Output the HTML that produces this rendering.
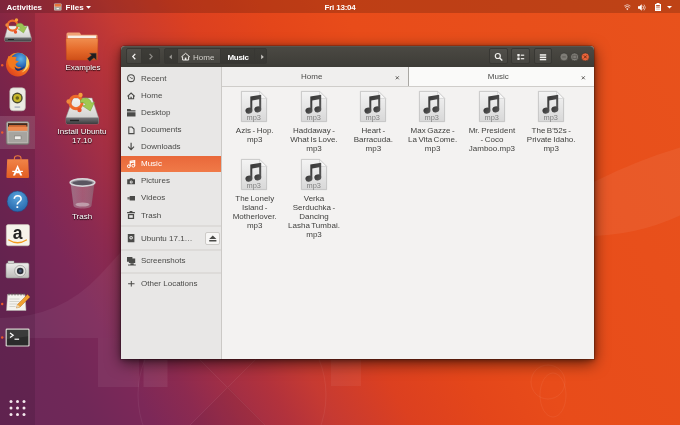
<!DOCTYPE html>
<html><head><meta charset="utf-8"><title>Files</title>
<style>
*{box-sizing:border-box;margin:0;padding:0}
html,body{width:680px;height:425px;overflow:hidden}
body{font-family:"Liberation Sans","DejaVu Sans",sans-serif;position:relative;font-size:8px;
background:linear-gradient(61.2deg,#6a2858 0%,#702858 10.2%,#7c2858 16.9%,#8c2a50 22.2%,#a02e46 26.9%,#b2323c 31.9%,#c63a32 36.8%,#dc4020 45.2%,#e4461a 53.7%,#e84c1a 62.5%,#e8521c 100%);
}
.abs{position:absolute}
#win,#topbar,.dl{will-change:transform}
svg{position:absolute;overflow:visible}
#topbar{left:0;top:0;width:680px;height:13px;background:rgba(0,0,0,.18);color:#fff;font-size:8px;font-weight:bold;line-height:13px;white-space:nowrap}
#dock{left:0;top:13px;width:35px;height:412px;background:rgba(20,0,20,.12)}
.dot{position:absolute;left:1px;width:2px;height:2px;border-radius:50%;background:#e8532a}
.dl{position:absolute;color:#fff;text-align:center;white-space:nowrap;font-size:8px;line-height:9.4px;text-shadow:0 1px 1px rgba(0,0,0,.8),0 0 2px rgba(0,0,0,.6)}
#win{left:121px;top:46px;width:473px;height:312.5px;background:#f3f2f1;border-radius:4px 4px 0 0;box-shadow:0 4px 15px rgba(0,0,0,.62),0 1px 5px rgba(0,0,0,.35),0 0 0 1px rgba(0,0,0,.18)}
#hdr{left:0;top:0;width:473px;height:21px;background:linear-gradient(#4b4943,#3d3c37);border-radius:4px 4px 0 0;border-top:1px solid #57554f}
.hb{position:absolute;top:1px;height:16.2px;background:linear-gradient(#514f4a,#464540);border:1px solid #383733;border-radius:2px}
.hbd{background:linear-gradient(#3d3c37,#383733)}
#side{left:0;top:21px;width:101px;height:291.5px;background:#e8e7e6;border-right:1px solid #cbc9c6}
.srow{position:absolute;left:0;width:100px;height:17px;line-height:17px;padding-left:20px;color:#4a4a48;font-size:8px;white-space:nowrap}
.srow.sel{background:linear-gradient(#e9683a,#f07a48);color:#fff}
.sep{position:absolute;left:0;width:100px;height:2px;background:#dddbd9}
#tabs{left:101px;top:21px;width:372px;height:20px;background:#eceae8;border-bottom:1px solid #cfcdca}
.tab{position:absolute;top:0;height:19px;line-height:20.5px;text-align:center;padding-right:6px;color:#4a4a48;font-size:8px}
.tx{position:absolute;top:0;font-size:8px;color:#55534f}
.file{position:absolute;width:60px;text-align:center;color:#3f3f3d;font-size:8px;line-height:9px;word-spacing:-0.7px}
.file .lbl{position:absolute;top:35.2px;left:-1.6px;width:64px}
</style></head><body>
<svg id="wall" width="680" height="425" viewBox="0 0 680 425" style="left:0;top:0">
<path d="M0 318Q60 318 100 275T150 215V338H0z" fill="#fff" opacity=".055"/>
<rect x="98" y="338" width="41" height="49" fill="#fff" opacity=".06"/>
<rect x="143.5" y="360" width="24" height="27" fill="#fff" opacity=".07"/>
<rect x="331" y="360" width="30" height="26" fill="#fff" opacity=".05"/>
<circle cx="232" cy="395" r="94" fill="none" stroke="#fff" stroke-width="1" opacity=".06"/>
<path d="M150 310L305 465M305 310L150 465" stroke="#fff" stroke-width="1" opacity=".06"/>
<path d="M228 387L320 480H136z" fill="#000" opacity=".04"/>
<path d="M520 228Q600 168 700 142V205Q620 252 520 228z" fill="#fff" opacity=".06"/>
<circle cx="548" cy="382" r="17" fill="none" stroke="#fff" stroke-width=".8" opacity=".08"/>
<ellipse cx="553" cy="395" rx="13" ry="22" fill="none" stroke="#fff" stroke-width=".8" opacity=".07"/>
</svg>
<div id="topbar" class="abs">
<span class="abs" style="left:6.5px;top:.6px">Activities</span>
<svg style="left:54px;top:3px" width="8" height="8" viewBox="0 0 8 8"><rect x="0" y="0.5" width="7.5" height="7" rx="0.8" fill="#c9c5bf"/><rect x="0.6" y="1" width="6.3" height="2.6" fill="#e8763a"/><rect x="0.6" y="4" width="6.3" height="3" fill="#a9a6a0"/><rect x="2.6" y="5" width="2.3" height="1.2" fill="#f4f2ee"/></svg>
<span class="abs" style="left:65.5px;top:.6px">Files</span>
<svg style="left:85.5px;top:5.5px" width="5" height="3" viewBox="0 0 5 3"><path d="M0 0h5L2.5 2.8z" fill="#fff"/></svg>
<span class="abs" style="left:324.5px;top:.6px;letter-spacing:-0.2px">Fri 13:04</span>
<svg style="left:624.2px;top:4.2px;opacity:.9" width="6.6" height="6.6" viewBox="0 0 14 14"><path d="M7 13.5L4.6 10.3a3.4 3.4 0 0 1 4.8 0z" fill="#fff"/><path d="M2.2 7.2a7 7 0 0 1 9.6 0" fill="none" stroke="#fff" stroke-width="1.8"/><path d="M0.3 4.3a10 10 0 0 1 13.4 0" fill="none" stroke="#fff" stroke-width="1.8" opacity=".75"/></svg>
<svg style="left:637.5px;top:3.5px" width="8" height="7" viewBox="0 0 16 14"><path d="M0 4.5h3L7.5 0.5v13L3 9.5H0z" fill="#fff"/><path d="M9.5 3.5a5 5 0 0 1 0 7" fill="none" stroke="#fff" stroke-width="1.7"/><path d="M12 1.2a8.5 8.5 0 0 1 0 11.6" fill="none" stroke="#fff" stroke-width="1.7" opacity=".7"/></svg>
<svg style="left:653.5px;top:3px" width="8" height="8" viewBox="0 0 16 16"><path d="M5 0h6v2h3v14H2V2h3z" fill="#fff"/><rect x="4.3" y="4.2" width="7.4" height="2.6" fill="#b5441c"/><rect x="4.3" y="8" width="7.4" height="2.4" fill="#d9a58f"/><rect x="4.3" y="11.4" width="7.4" height="2.4" fill="#e9cfc4"/></svg>
<svg style="left:667px;top:5.8px" width="5" height="3" viewBox="0 0 5 3"><path d="M0 0h5L2.5 2.6z" fill="#fff"/></svg>
</div>
<div id="dock" class="abs"></div>
<div class="abs" style="left:0;top:116px;width:35px;height:33px;background:rgba(255,255,255,.13)"></div>
<svg id="dockicons" style="left:0;top:0" width="35" height="425" viewBox="0 0 35 425">
<defs>
<linearGradient id="gdrv" x1="0" y1="0" x2="0" y2="1"><stop offset="0" stop-color="#f4f4f2"/><stop offset="1" stop-color="#c9c9c6"/></linearGradient>
<radialGradient id="gff" cx=".6" cy=".35" r=".7"><stop offset="0" stop-color="#5fb4e8"/><stop offset=".6" stop-color="#2a68b8"/><stop offset="1" stop-color="#1b3f86"/></radialGradient>
<linearGradient id="gfox" x1=".9" y1=".1" x2=".2" y2=".95"><stop offset="0" stop-color="#fbd23a"/><stop offset=".35" stop-color="#f58a22"/><stop offset=".7" stop-color="#ee5f1e"/><stop offset="1" stop-color="#dc431c"/></linearGradient>
<linearGradient id="gcab" x1="0" y1="0" x2="0" y2="1"><stop offset="0" stop-color="#b9b7b2"/><stop offset="1" stop-color="#8f8d88"/></linearGradient>
<linearGradient id="gbag" x1="0" y1="0" x2="0" y2="1"><stop offset="0" stop-color="#f08448"/><stop offset="1" stop-color="#e25d22"/></linearGradient>
<radialGradient id="ghelp" cx=".5" cy=".3" r=".8"><stop offset="0" stop-color="#5aa4dc"/><stop offset="1" stop-color="#1f5fa6"/></radialGradient>
<linearGradient id="gcam" x1="0" y1="0" x2="0" y2="1"><stop offset="0" stop-color="#eeeeec"/><stop offset="1" stop-color="#bcbcb9"/></linearGradient>
</defs>
<!-- installer -->
<g>
<path d="M8 26h20l3.2 11.5v3a1 1 0 0 1-1 1H5.8a1 1 0 0 1-1-1v-3z" fill="url(#gdrv)" stroke="#9b9b98" stroke-width=".5"/>
<path d="M4.8 37.5h26.4v3a1 1 0 0 1-1 1H5.8a1 1 0 0 1-1-1z" fill="url(#gdrvf)"/>
<rect x="8" y="39" width="6" height="1" fill="#222"/>
<circle cx="12.6" cy="25.6" r="5" fill="none" stroke="#ee6a2a" stroke-width="2.1"/>
<circle cx="7" cy="25" r="1.7" fill="#f08a3a"/><circle cx="16.5" cy="20" r="1.7" fill="#f5a03c"/><circle cx="15.5" cy="32" r="1.7" fill="#e8532a"/>
<path d="M16.5 24.5c3-2.5 7-1.5 8 2.5l2.5-.5-3.5 6.5-5.5-4 2.5-.6c-.8-1.8-2.5-2.4-4-1.8z" fill="#9cc455" stroke="#6e9e38" stroke-width=".4"/>
</g>
<!-- firefox -->
<circle class="dotc" cx="2.2" cy="65.2" r="1.2" fill="#ec5a2a"/>
<circle cx="17.8" cy="64.6" r="11.8" fill="url(#gfox)"/>
<circle cx="19" cy="61.6" r="8.8" fill="url(#gff)"/>
<path d="M26.5 56c2.6 3 3 7 1.6 10.5-1.2 3-3.6 5-6.5 6 3-2.5 4.5-5.5 4.5-9 0-2.6.6-5.5.4-7.5z" fill="#fbe37a" opacity=".9"/>
<path d="M8 56.5c1.5-.4 3.2-.2 4.4.6 1.6-.5 3.4-.3 4.4.6-.9.7-1.3 1.7-1.2 2.7 1.3.4 2.4.6 3.3 1.3-1.7.5-3.1 1.6-3.4 3 1.2 1.9 3.3 2.8 5.6 2.2-2 2.6-5.8 3.4-8.6 2C9 67.5 7.2 63.5 8 56.5z" fill="#f2791f"/>
<path d="M14.6 66.5c1.5 1.9 3.9 2.7 6.4 2 1.5-.5 2.6-1.3 3.4-2.4-1.4 3.2-4.2 5-7 4.6-1.8-.8-2.7-2.4-2.8-4.2z" fill="#1b2c6a"/>
<!-- rhythmbox -->
<rect x="9.8" y="87.8" width="15.6" height="23" rx="3.5" fill="#ecebe4" stroke="#b9b8ae" stroke-width=".6"/>
<circle cx="17.3" cy="98" r="5.4" fill="#4a4a30"/><circle cx="17.3" cy="98" r="4" fill="#c9b92a"/><circle cx="17.3" cy="98" r="1.8" fill="#6a6418"/>
<rect x="14.3" y="106.3" width="6" height="1.6" rx=".8" fill="#b5bcc4"/>
<!-- files -->
<circle cx="2.2" cy="132.5" r="1.2" fill="#ec5a2a"/>
<rect x="6.3" y="121.6" width="22.8" height="22.8" rx="1.8" fill="url(#gcab)" stroke="#6f6d68" stroke-width=".6"/>
<rect x="8" y="123.2" width="19.4" height="7.6" fill="#ee8a50"/>
<rect x="8" y="123.2" width="19.4" height="3.4" fill="#3c2a22"/>
<rect x="9" y="125.2" width="17.4" height="1.6" fill="#e8763a"/>
<rect x="8" y="131.8" width="19.4" height="11" fill="#a6a49f" stroke="#cfcdc8" stroke-width=".5"/>
<rect x="14.4" y="136" width="6.6" height="3.6" fill="#f1efeb" stroke="#6f6d68" stroke-width=".5"/>
<!-- software -->
<path d="M7.2 159.3h21l.8 17.7a1 1 0 0 1-1 1h-20.6a1 1 0 0 1-1-1z" fill="url(#gbag)"/>
<path d="M14.4 160.5v-2.2a3.3 2.6 0 0 1 6.6 0v2.2" fill="none" stroke="#ec7a3e" stroke-width="1.1"/>
<path d="M12.9 175.6l4.7-10.6l4.7 10.6h-2.2l-.9-2.3h-3.2l-.9 2.3zM16.7 171.4h1.8l-.9-2.6z" fill="#fff" fill-rule="evenodd"/>
<rect x="12.3" y="170.8" width="10.6" height="1.2" fill="#fff"/>
<!-- help -->
<circle cx="17.5" cy="201.4" r="10.4" fill="url(#ghelp)" stroke="#1a4a86" stroke-width=".5"/>
<text x="17.5" y="207.6" style="font-family:'Liberation Sans',sans-serif" font-size="17.5" fill="#fff" text-anchor="middle">?</text>
<!-- amazon -->
<rect x="6.3" y="224.6" width="23.2" height="21.2" rx="1.8" fill="#f6f3ea" stroke="#cfccbf" stroke-width=".5"/>
<text x="17.6" y="238.6" style="font-family:'Liberation Sans',sans-serif" font-size="17.5" font-weight="bold" fill="#222" text-anchor="middle">a</text>
<path d="M8.8 240c5.5 3.4 12.2 3.4 17.6 0" fill="none" stroke="#f39a1e" stroke-width="1.4" stroke-linecap="round"/>
<!-- camera -->
<rect x="6" y="263" width="23" height="15" rx="1.5" fill="url(#gcam)" stroke="#8e8e8b" stroke-width=".6"/>
<rect x="8" y="261" width="6" height="2.5" fill="#d8d8d5" stroke="#8e8e8b" stroke-width=".4"/>
<circle cx="20.2" cy="271" r="5.6" fill="#e4e4e1" stroke="#8e8e8b" stroke-width=".6"/>
<circle cx="20.2" cy="271" r="3.3" fill="#2c3038"/><circle cx="20.2" cy="271" r="1.5" fill="#4a5a78"/>
<!-- gedit -->
<circle cx="2.2" cy="304" r="1.2" fill="#ec5a2a"/>
<path d="M7.5 294.5h17.5l1 16H6.5z" fill="#f4f3ee" stroke="#b4b3ab" stroke-width=".5"/>
<path d="M9 293v2.5M12 293v2.5M15 293v2.5M18 293v2.5M21 293v2.5M24 293v2.5" stroke="#55554f" stroke-width=".8"/>
<path d="M9.5 299h10M9.5 301.5h10M9.5 304h8M9.5 306.5h6" stroke="#c6c5bd" stroke-width=".7"/>
<path d="M27.5 294.5l2.5 2.5l-10 10l-3.5 1l1-3.5z" fill="#f0a030" stroke="#b56a1c" stroke-width=".5"/>
<path d="M16.5 308l1-3.5 2.5 2.5z" fill="#e9d7b0"/>
<!-- terminal -->
<circle cx="2.2" cy="337.5" r="1.2" fill="#ec5a2a"/>
<rect x="5.6" y="328.6" width="24" height="18" rx="1.4" fill="#d7d5d0"/>
<rect x="6.8" y="329.8" width="21.6" height="15.6" rx=".6" fill="#2b2b2b"/>
<path d="M6.8 329.8h21.6v6.5l-21.6 3z" fill="#fff" opacity=".08"/>
<path d="M10 333l3.2 2.3l-3.2 2.3" fill="none" stroke="#fff" stroke-width="1.2"/>
<rect x="14.5" y="338.6" width="4.6" height="1.2" fill="#fff"/>
<!-- grid -->
<g fill="#f4e9ee"><circle cx="11" cy="401.5" r="1.5"/><circle cx="17.5" cy="401.5" r="1.5"/><circle cx="24" cy="401.5" r="1.5"/><circle cx="11" cy="408" r="1.5"/><circle cx="17.5" cy="408" r="1.5"/><circle cx="24" cy="408" r="1.5"/><circle cx="11" cy="414.5" r="1.5"/><circle cx="17.5" cy="414.5" r="1.5"/><circle cx="24" cy="414.5" r="1.5"/></g>
</svg>
<svg id="deskicons" style="left:0;top:0" width="130" height="230" viewBox="0 0 130 230">
<defs>
<linearGradient id="gfold" x1="0" y1="0" x2="0" y2="1"><stop offset="0" stop-color="#f08d4e"/><stop offset=".5" stop-color="#e66c2c"/><stop offset="1" stop-color="#cf4f18"/></linearGradient>
<linearGradient id="gdrvf" x1="0" y1="0" x2="0" y2="1"><stop offset="0" stop-color="#77777a"/><stop offset="1" stop-color="#3c3c3e"/></linearGradient>
<linearGradient id="gtrash" x1="0" y1="0" x2="1" y2="0"><stop offset="0" stop-color="#a898a4" stop-opacity=".6"/><stop offset=".5" stop-color="#c9b4be" stop-opacity=".35"/><stop offset="1" stop-color="#8a7a86" stop-opacity=".6"/></linearGradient>
</defs>
<!-- folder -->
<path d="M66.5 34a1.5 1.5 0 0 1 1.5-1.5h11a1.5 1.5 0 0 1 1.4 1l.6 1.3h15.5a1 1 0 0 1 1 1v6h-31z" fill="#f0a274"/>
<rect x="68" y="35.6" width="28" height="6" fill="#f7efe6"/>
<path d="M66 39.5a1 1 0 0 1 1-1h30a1 1 0 0 1 1 1l-.5 19.5a1 1 0 0 1-1 1h-29a1 1 0 0 1-1-1z" fill="url(#gfold)" stroke="#c94f1a" stroke-width=".5"/>
<rect x="86" y="52.5" width="10.5" height="9" rx="1" fill="#2a2a2a" opacity=".0"/>
<path d="M89.5 53.2h6.8v6.8l-2.3-2.3l-4.2 3.6l-2.6-2.6l4.4-3.4z" fill="#1e1e1e" stroke="#555" stroke-width=".3"/>
<!-- installer big -->
<path d="M73 98h19l6.5 19.5v5a1.5 1.5 0 0 1-1.5 1.5h-29.5a1.5 1.5 0 0 1-1.5-1.5v-5z" fill="url(#gdrv)" stroke="#8e8e8b" stroke-width=".5"/>
<path d="M66 117.5h32.5v5a1.5 1.5 0 0 1-1.5 1.5h-29.5a1.5 1.5 0 0 1-1.5-1.5z" fill="url(#gdrvf)"/>
<rect x="70" y="119.8" width="9" height="1.4" fill="#222"/>
<circle cx="76" cy="102.5" r="6.2" fill="none" stroke="#ee6a2a" stroke-width="3"/>
<circle cx="68.6" cy="101.5" r="2.2" fill="#f08a3a"/><circle cx="80.5" cy="95" r="2.2" fill="#f5a03c"/><circle cx="79.5" cy="110" r="2.2" fill="#e8532a"/>
<path d="M80.5 100c3.5-3.5 9.5-2.5 11 3l3-.8l-4.2 8.8l-7.8-5.2l3.4-.9c-1-2.2-3.4-3-5.4-2.2z" fill="#a0c850" stroke="#6e9e38" stroke-width=".5"/>
<!-- trash -->
<path d="M70.5 183l3 22.5c.3 1.8 3.5 3 9 3s8.7-1.2 9-3l3-22.5z" fill="url(#gtrash)"/>
<ellipse cx="82.5" cy="204.5" rx="7" ry="2" fill="#d9d2d6" opacity=".55"/>
<ellipse cx="82.5" cy="182.5" rx="12.3" ry="3.6" fill="#8c8890" stroke="#d6d4d8" stroke-width="1.6"/>
<ellipse cx="82.5" cy="183" rx="10" ry="2.2" fill="#5a5560"/>
</svg>
<div class="dl" style="left:52px;top:63px;width:62px">Examples</div>
<div class="dl" style="left:50px;top:126.5px;width:64px">Install Ubuntu<br>17.10</div>
<div class="dl" style="left:52px;top:211.5px;width:60px">Trash</div>
<div id="win" class="abs">
 <div id="hdr" class="abs">
<div class="hb" style="left:5px;width:16px;border-radius:2px 0 0 2px"></div>
<div class="hb hbd" style="left:20px;width:19px;border-radius:0 2px 2px 0"></div>
<div class="hb hbd" style="left:43px;width:13.5px;border-radius:2px 0 0 2px"></div>
<div class="hb" style="left:55.5px;width:44px;border-radius:0"></div>
<div class="hb hbd" style="left:98.5px;width:35px;border-radius:0"></div>
<div class="hb hbd" style="left:132.5px;width:13.5px;border-radius:0 2px 2px 0"></div>
<div class="hb" style="left:368px;width:18.5px"></div>
<div class="hb" style="left:390.2px;width:18.5px"></div>
<div class="hb" style="left:412.7px;width:18.5px"></div>
<svg style="left:0;top:-1px" width="473" height="22" viewBox="0 0 473 22">
<path d="M14.3 7.9l-2.5 2.7l2.5 2.7" fill="none" stroke="#f4f3f0" stroke-width="1.3"/>
<path d="M28.6 7.9l2.5 2.7l-2.5 2.7" fill="none" stroke="#8d8b86" stroke-width="1.3"/>
<path d="M50.8 8.6v4.7l-2.6-2.350z" fill="#9d9b96"/>
<path d="M140.2 8.6v4.7l2.6-2.350z" fill="#c9c7c2"/>
<path d="M60.3 11l4.3-3.7l4.3 3.7M61.6 10.4v3.6h6v-3.6" fill="none" stroke="#eceae6" stroke-width="1"/>
<rect x="63.8" y="11.6" width="1.6" height="2.4" fill="#f1f0ed"/>
<circle cx="376.8" cy="10" r="2.5" fill="none" stroke="#f1f0ed" stroke-width="1.2"/><path d="M378.6 11.9l2.7 2.7" stroke="#f1f0ed" stroke-width="1.4"/>
<g fill="#f1f0ed"><rect x="396.3" y="8" width="2.4" height="2.4" rx=".6"/><rect x="396.3" y="11.5" width="2.4" height="2.4" rx=".6"/><rect x="399.8" y="8.6" width="3.4" height="1.2"/><rect x="399.8" y="12.1" width="3.4" height="1.2"/>
<rect x="418.8" y="8.2" width="6.4" height="1.5"/><rect x="418.8" y="10.5" width="6.4" height="1.5"/><rect x="418.8" y="12.8" width="6.4" height="1.5"/></g>
<circle cx="443" cy="10.9" r="4" fill="#7f7d77" stroke="#33322e" stroke-width=".6"/>
<rect x="441.2" y="10.5" width="3.6" height=".9" fill="#5a5853"/>
<circle cx="453.6" cy="10.9" r="4" fill="#7f7d77" stroke="#33322e" stroke-width=".6"/>
<rect x="451.9" y="9.2" width="3.4" height="3.4" fill="none" stroke="#5a5853" stroke-width=".8"/>
<circle cx="464.3" cy="10.9" r="4" fill="#ea6338" stroke="#33322e" stroke-width=".6"/>
<path d="M462.8 9.4l3 3M465.8 9.4l-3 3" stroke="#6a2a14" stroke-width=".9"/>
</svg>
<span class="abs" style="left:72px;top:0;line-height:21px;color:#d2d0cb;font-size:8px">Home</span>
<span class="abs" style="left:106.5px;top:0;line-height:21px;color:#fff;font-size:8px;font-weight:bold;letter-spacing:-0.3px">Music</span>
</div>
 <div id="side" class="abs">
<div class="srow" style="top:2.90px">Recent</div>
<div class="srow" style="top:19.98px">Home</div>
<div class="srow" style="top:37.06px">Desktop</div>
<div class="srow" style="top:54.14px">Documents</div>
<div class="srow" style="top:71.22px">Downloads</div>
<div class="srow sel" style="top:89px;height:16px;line-height:15.7px">Music</div>
<div class="srow" style="top:105.38px">Pictures</div>
<div class="srow" style="top:122.46px">Videos</div>
<div class="srow" style="top:139.54px">Trash</div>
<div class="srow" style="top:162.5px">Ubuntu 17.1…</div>
<div class="srow" style="top:185.1px">Screenshots</div>
<div class="srow" style="top:208.1px">Other Locations</div>
<div class="sep" style="top:158px"></div>
<div class="sep" style="top:182px"></div>
<div class="sep" style="top:205px"></div>
<div class="abs" style="left:84.2px;top:165px;width:15px;height:12.5px;background:#f7f6f5;border:1px solid #cdcbc8;border-radius:2px"></div>
<svg style="left:0;top:0" width="101" height="291.5" viewBox="121 67 101 291.5">
<g fill="none" stroke="#4a4a48" stroke-width="1.1">
<circle cx="131" cy="78.2" r="3.4"/><path d="M129.6 76.7l1.5 1.6h1.8" stroke-width=".8"/>
<path d="M127.5 96.3l3.6-3.3l3.6 3.3M128.6 95.7v3h5v-3"/><path d="M131.1 96.8v1.9" stroke-width="1.3"/>
<path d="M128.8 127h3.2l2 2v4.6h-5.2z"/>
<path d="M131.1 142.8v6.2M128.2 146.7l2.9 2.9l2.9-2.9" stroke-width="1.2"/>
</g>
<g fill="#4a4a48">
<path d="M127 109.1h3.4l.9 1.1h4.2v1.3h-8.5zM127 112.3h8.5v4.2h-8.5z"/>
<path d="M129.3 179.3l.700-1.1h2.4l.700 1.1h1.9v5h-7.8v-5z"/>
<path d="M129.7 196h5.3v4.6h-5.3zM127.6 197h1v2.6h-1zM128.9 197h.5v2.6h-.5z"/>
<path d="M127.1 211.9h7.8v1.3h-7.8zM129.6 211h2.8v.9h-2.8zM127.9 213.9h6.2v5.2h-6.2z"/>
<path d="M127.8 234h6.6v8.3h-6.6z"/>
<path d="M127 257.1h5.4v4.6h-5.4zM128.9 258.6h6.3v4.5h-6.3zM130.4 263.3h3.3v1.2h-3.3zM128 264.5h7.8v.9h-7.8z"/>
<path d="M130.8 281h1v2.2h2.7v1h-2.7v2.2h-1v-2.2h-2.7v-1h2.7z"/>
<path d="M209.2 239l3.6-3.6l3.6 3.6zM209.2 240h7.2v1.4h-7.2z"/>
</g>
<circle cx="131.2" cy="181.9" r="1.5" fill="#e8e7e6"/><circle cx="131.2" cy="181.9" r=".6" fill="#4a4a48"/>
<rect x="129.2" y="215.2" width="3.6" height="2.6" fill="#e8e7e6"/>
<circle cx="131.1" cy="237.8" r="1.8" fill="#e8e7e6"/><circle cx="131.1" cy="237.8" r=".7" fill="#4a4a48"/>
<g fill="none" stroke="#fff" stroke-width="1"><circle cx="128.8" cy="166.2" r="1.4"/><circle cx="133.3" cy="165.7" r="1.4"/><path d="M130.2 166.2v-5l4.5-.6v5.1M130.2 162.6l4.5-.6" stroke-width="1.1"/></g>
</svg>
</div>
 <div id="tabs" class="abs">
<div class="tab" style="left:0;width:185.5px;background:#f0efee">Home</div>
<div class="tab" style="left:185.5px;width:186.5px;background:#fafaf9;border-left:1px solid #a9a7a3">Music</div>
<svg style="left:0;top:1px" width="373" height="18" viewBox="0 0 373 18"><path d="M173.8 8.3l3 3M176.8 8.3l-3 3M359.8 8.3l3 3M362.8 8.3l-3 3" stroke="#4f4d49" stroke-width=".9"/></svg>
</div>
 <svg width="0" height="0" style="left:0;top:0"><defs><linearGradient id="gpage" x1="0" y1="0" x2="0" y2="1"><stop offset="0" stop-color="#f4f4f4"/><stop offset="1" stop-color="#d8d8d8"/></linearGradient><linearGradient id="gnote" x1="0" y1="0" x2="1" y2="1"><stop offset="0" stop-color="#333"/><stop offset="1" stop-color="#5c5c5c"/></linearGradient></defs></svg>
<div id="files">
<div class="file" style="left:103.3px;top:44.8px"><svg style="left:17px;top:0" width="26" height="31" viewBox="0 0 26 31"><path d="M.4.4h18.2l7 7v23.2h-25.2z" fill="url(#gpage)" stroke="#bdbdbd" stroke-width=".8"/><path d="M18.6.4v5.5a1.5 1.5 0 0 0 1.5 1.5h5.5z" fill="#fafafa" stroke="#c6c6c6" stroke-width=".6"/><g fill="url(#gnote)"><path d="M9.3 5.6L20.2 3.8V18.2H18.2V8.3L11.3 9.4V19.5H9.3z"/><ellipse cx="7.9" cy="19.7" rx="3.5" ry="3" transform="rotate(-15 7.9 19.7)"/><ellipse cx="16.8" cy="18.4" rx="3.5" ry="3" transform="rotate(-15 16.8 18.4)"/></g><text x="12.8" y="29" text-anchor="middle" font-size="7.4" fill="#7e7e7e" style="font-family:'Liberation Sans',sans-serif">mp3</text></svg><div class="lbl">Azis - Hop.<br>mp3</div></div>
<div class="file" style="left:162.6px;top:44.8px"><svg style="left:17px;top:0" width="26" height="31" viewBox="0 0 26 31"><path d="M.4.4h18.2l7 7v23.2h-25.2z" fill="url(#gpage)" stroke="#bdbdbd" stroke-width=".8"/><path d="M18.6.4v5.5a1.5 1.5 0 0 0 1.5 1.5h5.5z" fill="#fafafa" stroke="#c6c6c6" stroke-width=".6"/><g fill="url(#gnote)"><path d="M9.3 5.6L20.2 3.8V18.2H18.2V8.3L11.3 9.4V19.5H9.3z"/><ellipse cx="7.9" cy="19.7" rx="3.5" ry="3" transform="rotate(-15 7.9 19.7)"/><ellipse cx="16.8" cy="18.4" rx="3.5" ry="3" transform="rotate(-15 16.8 18.4)"/></g><text x="12.8" y="29" text-anchor="middle" font-size="7.4" fill="#7e7e7e" style="font-family:'Liberation Sans',sans-serif">mp3</text></svg><div class="lbl">Haddaway -<br>What Is Love.<br>mp3</div></div>
<div class="file" style="left:221.9px;top:44.8px"><svg style="left:17px;top:0" width="26" height="31" viewBox="0 0 26 31"><path d="M.4.4h18.2l7 7v23.2h-25.2z" fill="url(#gpage)" stroke="#bdbdbd" stroke-width=".8"/><path d="M18.6.4v5.5a1.5 1.5 0 0 0 1.5 1.5h5.5z" fill="#fafafa" stroke="#c6c6c6" stroke-width=".6"/><g fill="url(#gnote)"><path d="M9.3 5.6L20.2 3.8V18.2H18.2V8.3L11.3 9.4V19.5H9.3z"/><ellipse cx="7.9" cy="19.7" rx="3.5" ry="3" transform="rotate(-15 7.9 19.7)"/><ellipse cx="16.8" cy="18.4" rx="3.5" ry="3" transform="rotate(-15 16.8 18.4)"/></g><text x="12.8" y="29" text-anchor="middle" font-size="7.4" fill="#7e7e7e" style="font-family:'Liberation Sans',sans-serif">mp3</text></svg><div class="lbl">Heart -<br>Barracuda.<br>mp3</div></div>
<div class="file" style="left:281.2px;top:44.8px"><svg style="left:17px;top:0" width="26" height="31" viewBox="0 0 26 31"><path d="M.4.4h18.2l7 7v23.2h-25.2z" fill="url(#gpage)" stroke="#bdbdbd" stroke-width=".8"/><path d="M18.6.4v5.5a1.5 1.5 0 0 0 1.5 1.5h5.5z" fill="#fafafa" stroke="#c6c6c6" stroke-width=".6"/><g fill="url(#gnote)"><path d="M9.3 5.6L20.2 3.8V18.2H18.2V8.3L11.3 9.4V19.5H9.3z"/><ellipse cx="7.9" cy="19.7" rx="3.5" ry="3" transform="rotate(-15 7.9 19.7)"/><ellipse cx="16.8" cy="18.4" rx="3.5" ry="3" transform="rotate(-15 16.8 18.4)"/></g><text x="12.8" y="29" text-anchor="middle" font-size="7.4" fill="#7e7e7e" style="font-family:'Liberation Sans',sans-serif">mp3</text></svg><div class="lbl">Max Gazze -<br>La Vita Come.<br>mp3</div></div>
<div class="file" style="left:340.5px;top:44.8px"><svg style="left:17px;top:0" width="26" height="31" viewBox="0 0 26 31"><path d="M.4.4h18.2l7 7v23.2h-25.2z" fill="url(#gpage)" stroke="#bdbdbd" stroke-width=".8"/><path d="M18.6.4v5.5a1.5 1.5 0 0 0 1.5 1.5h5.5z" fill="#fafafa" stroke="#c6c6c6" stroke-width=".6"/><g fill="url(#gnote)"><path d="M9.3 5.6L20.2 3.8V18.2H18.2V8.3L11.3 9.4V19.5H9.3z"/><ellipse cx="7.9" cy="19.7" rx="3.5" ry="3" transform="rotate(-15 7.9 19.7)"/><ellipse cx="16.8" cy="18.4" rx="3.5" ry="3" transform="rotate(-15 16.8 18.4)"/></g><text x="12.8" y="29" text-anchor="middle" font-size="7.4" fill="#7e7e7e" style="font-family:'Liberation Sans',sans-serif">mp3</text></svg><div class="lbl">Mr. President<br>- Coco<br>Jamboo.mp3</div></div>
<div class="file" style="left:399.8px;top:44.8px"><svg style="left:17px;top:0" width="26" height="31" viewBox="0 0 26 31"><path d="M.4.4h18.2l7 7v23.2h-25.2z" fill="url(#gpage)" stroke="#bdbdbd" stroke-width=".8"/><path d="M18.6.4v5.5a1.5 1.5 0 0 0 1.5 1.5h5.5z" fill="#fafafa" stroke="#c6c6c6" stroke-width=".6"/><g fill="url(#gnote)"><path d="M9.3 5.6L20.2 3.8V18.2H18.2V8.3L11.3 9.4V19.5H9.3z"/><ellipse cx="7.9" cy="19.7" rx="3.5" ry="3" transform="rotate(-15 7.9 19.7)"/><ellipse cx="16.8" cy="18.4" rx="3.5" ry="3" transform="rotate(-15 16.8 18.4)"/></g><text x="12.8" y="29" text-anchor="middle" font-size="7.4" fill="#7e7e7e" style="font-family:'Liberation Sans',sans-serif">mp3</text></svg><div class="lbl">The B'52s -<br>Private Idaho.<br>mp3</div></div>
<div class="file" style="left:103.3px;top:113px"><svg style="left:17px;top:0" width="26" height="31" viewBox="0 0 26 31"><path d="M.4.4h18.2l7 7v23.2h-25.2z" fill="url(#gpage)" stroke="#bdbdbd" stroke-width=".8"/><path d="M18.6.4v5.5a1.5 1.5 0 0 0 1.5 1.5h5.5z" fill="#fafafa" stroke="#c6c6c6" stroke-width=".6"/><g fill="url(#gnote)"><path d="M9.3 5.6L20.2 3.8V18.2H18.2V8.3L11.3 9.4V19.5H9.3z"/><ellipse cx="7.9" cy="19.7" rx="3.5" ry="3" transform="rotate(-15 7.9 19.7)"/><ellipse cx="16.8" cy="18.4" rx="3.5" ry="3" transform="rotate(-15 16.8 18.4)"/></g><text x="12.8" y="29" text-anchor="middle" font-size="7.4" fill="#7e7e7e" style="font-family:'Liberation Sans',sans-serif">mp3</text></svg><div class="lbl">The Lonely<br>Island -<br>Motherlover.<br>mp3</div></div>
<div class="file" style="left:162.6px;top:113px"><svg style="left:17px;top:0" width="26" height="31" viewBox="0 0 26 31"><path d="M.4.4h18.2l7 7v23.2h-25.2z" fill="url(#gpage)" stroke="#bdbdbd" stroke-width=".8"/><path d="M18.6.4v5.5a1.5 1.5 0 0 0 1.5 1.5h5.5z" fill="#fafafa" stroke="#c6c6c6" stroke-width=".6"/><g fill="url(#gnote)"><path d="M9.3 5.6L20.2 3.8V18.2H18.2V8.3L11.3 9.4V19.5H9.3z"/><ellipse cx="7.9" cy="19.7" rx="3.5" ry="3" transform="rotate(-15 7.9 19.7)"/><ellipse cx="16.8" cy="18.4" rx="3.5" ry="3" transform="rotate(-15 16.8 18.4)"/></g><text x="12.8" y="29" text-anchor="middle" font-size="7.4" fill="#7e7e7e" style="font-family:'Liberation Sans',sans-serif">mp3</text></svg><div class="lbl">Verka<br>Serduchka -<br>Dancing<br>Lasha Tumbai.<br>mp3</div></div>
</div>
</div>
</body></html>
